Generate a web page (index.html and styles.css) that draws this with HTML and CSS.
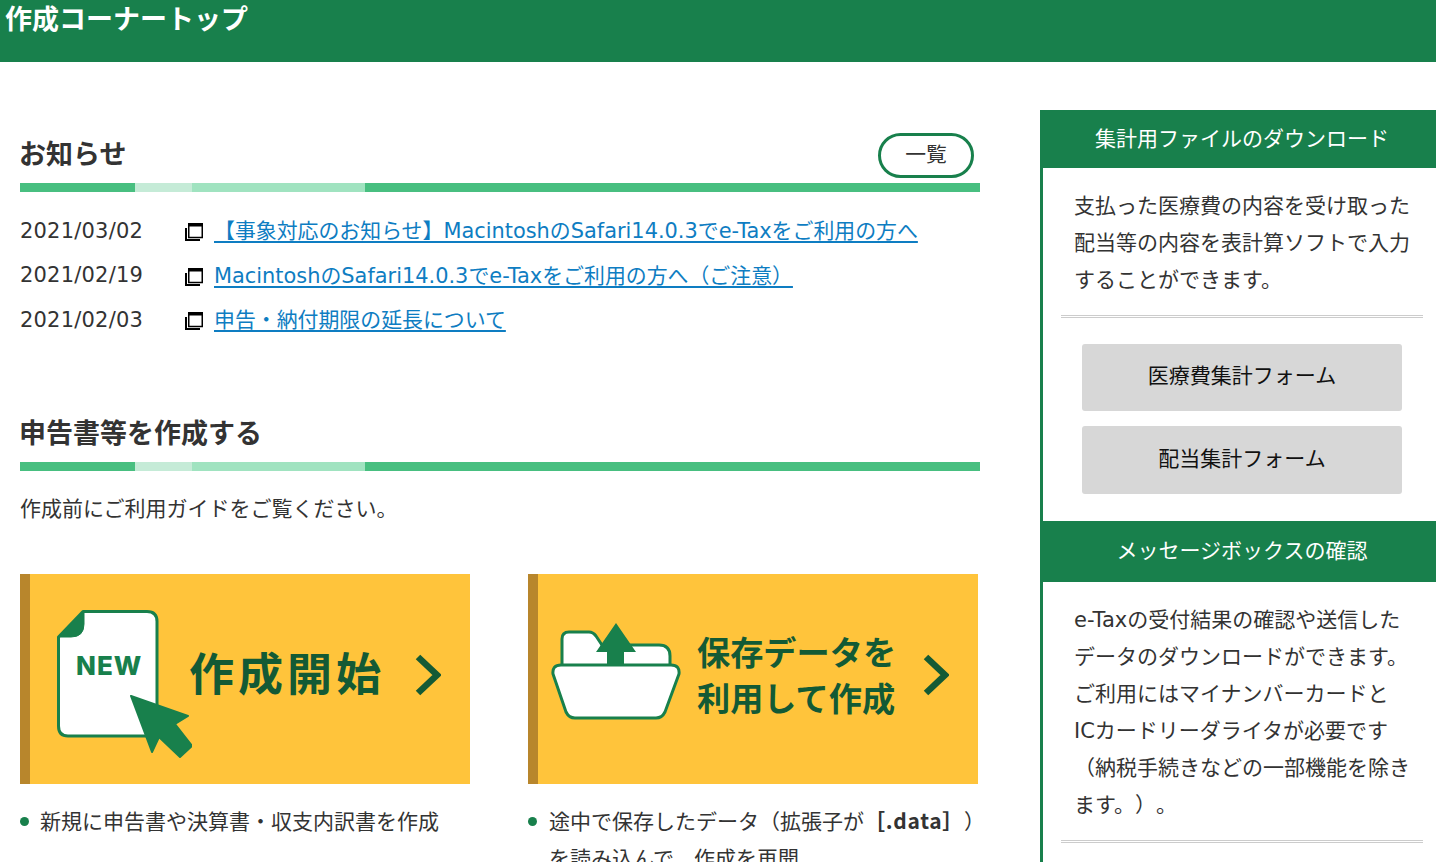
FILE: index.html
```html
<!DOCTYPE html>
<html lang="ja">
<head>
  <meta charset="UTF-8">
  <title>作成コーナートップ</title>
  <link rel="stylesheet" href="styles.css">
</head>
<body>
  <header class="page-head">
    <h1>作成コーナートップ</h1>
  </header>
  <div class="page-body">
    <main class="main-col">
      <section class="news">
        <div class="sec-head">
          <h2>お知らせ</h2>
          <a class="pill" href="#">一覧</a>
        </div>
        <div class="sec-bar"></div>
        <ul class="news-list">
          <li>
            <span class="news-date">2021/03/02</span>
            <svg class="win-icon" viewBox="0 0 18 18"><path d="M1 5v12h14" fill="none" stroke="#000" stroke-width="2"/><rect x="3.75" y="1" width="13.5" height="13.5" fill="#fff" stroke="#000" stroke-width="1.5"/><rect x="3" y="0" width="15" height="3.5"/></svg>
            <a href="#">【事象対応のお知らせ】MacintoshのSafari14.0.3でe-Taxをご利用の方へ</a>
          </li>
          <li>
            <span class="news-date">2021/02/19</span>
            <svg class="win-icon" viewBox="0 0 18 18"><path d="M1 5v12h14" fill="none" stroke="#000" stroke-width="2"/><rect x="3.75" y="1" width="13.5" height="13.5" fill="#fff" stroke="#000" stroke-width="1.5"/><rect x="3" y="0" width="15" height="3.5"/></svg>
            <a href="#">MacintoshのSafari14.0.3でe-Taxをご利用の方へ（ご注意）</a>
          </li>
          <li>
            <span class="news-date">2021/02/03</span>
            <svg class="win-icon" viewBox="0 0 18 18"><path d="M1 5v12h14" fill="none" stroke="#000" stroke-width="2"/><rect x="3.75" y="1" width="13.5" height="13.5" fill="#fff" stroke="#000" stroke-width="1.5"/><rect x="3" y="0" width="15" height="3.5"/></svg>
            <a href="#">申告・納付期限の延長について</a>
          </li>
        </ul>
      </section>

      <section class="create">
        <div class="sec-head">
          <h2>申告書等を作成する</h2>
        </div>
        <div class="sec-bar"></div>
        <p class="guide">作成前にご利用ガイドをご覧ください。</p>
        <div class="start-cols">
          <div class="start-col">
            <a class="start-btn" href="#">
              <svg class="icon-new" viewBox="0 0 135 149">
                <path d="M26 1.5H90Q100 1.5 100 11.500V116Q100 126 90 126H11Q1.500 126 1.500 116V27Z" fill="#fff" stroke="#18804c" stroke-width="3" stroke-linejoin="round"/>
                <path d="M1.500 27L27 1.500V14Q27 27 14 27Z" fill="#18804c" stroke="#18804c"/>
                <text class="new-label" x="19" y="65">NEW</text>
                <path d="M74 86L131 106L118 114L135 136L123 147L102 127L95 142Z" fill="#18804c" stroke="#18804c" stroke-width="2" stroke-linejoin="round"/>
              </svg>
              <span class="start-big">作成開始</span>
              <svg class="chevron" viewBox="0 0 26 42"><path d="M3 3L22 21L3 39" fill="none" stroke="#135a35" stroke-width="6.500"/></svg>
            </a>
            <ul class="notes">
              <li>新規に申告書や決算書・収支内訳書を作成</li>
            </ul>
          </div>
          <div class="start-col">
            <a class="start-btn" href="#">
              <svg class="icon-folder" viewBox="0 0 130 98">
                <path d="M11 44V17Q11 10 18 10H38Q42 10 45 14L51 23H108Q119 23 119 34V44Z" fill="#fff" stroke="#18804c" stroke-width="3"/>
                <path d="M65 1L85 30H73V44H56V30H45Z" fill="#18804c"/>
                <path d="M10 43H120Q129 43 128 52L114 90Q111 96 105 96H24Q18 96 15 90L2 52Q1 43 10 43Z" fill="#fff" stroke="#18804c" stroke-width="3"/>
              </svg>
              <span class="start-mid">保存データを<br>利用して作成</span>
              <svg class="chevron" viewBox="0 0 26 42"><path d="M3 3L22 21L3 39" fill="none" stroke="#135a35" stroke-width="6.500"/></svg>
            </a>
            <ul class="notes">
              <li class="wide">途中で保存したデータ（拡張子が<b>［.data］</b>）<br>を読み込んで、作成を再開</li>
            </ul>
          </div>
        </div>
      </section>
    </main>

    <aside class="side-col">
      <h3 class="side-head">集計用ファイルのダウンロード</h3>
      <div class="side-box">
        <p>支払った医療費の内容を受け取った<br>配当等の内容を表計算ソフトで入力<br>することができます。</p>
        <hr>
        <a class="side-btn" href="#">医療費集計フォーム</a>
        <a class="side-btn tall" href="#">配当集計フォーム</a>
      </div>
      <h3 class="side-head msg">メッセージボックスの確認</h3>
      <div class="side-box">
        <p>e-Taxの受付結果の確認や送信した<br>データのダウンロードができます。<br>ご利用にはマイナンバーカードと<br>ICカードリーダライタが必要です<br>（納税手続きなどの一部機能を除き<br>ます。）。</p>
        <hr>
      </div>
    </aside>
  </div>
</body>
</html>
```

FILE: styles.css
```css
body {
  margin: 0;
  padding: 0;
  font-family: "DejaVu Sans", "Noto Sans CJK JP", sans-serif;
  font-size: 21px;
  color: #333;
  background: #fff;
  overflow-x: hidden;
  text-spacing-trim: space-all;
}

a {
  text-decoration: none;
}

ul {
  list-style: none;
  margin: 0;
  padding: 0;
}

.page-head {
  height: 62px;
  background: #18804c;
}

.page-head h1 {
  margin: 0;
  padding-left: 5px;
  font-size: 27px;
  line-height: 39px;
  color: #fff;
}

.page-body {
  display: flex;
  gap: 60px;
  padding-left: 20px;
}

.main-col {
  width: 960px;
  padding-top: 71px;
}

.side-col {
  width: 396px;
  padding-top: 48px;
}

/* section titles */
.sec-head {
  display: flex;
  justify-content: space-between;
  min-height: 45px;
  margin-bottom: 5px;
}

.sec-head h2 {
  margin: 0 0 0 -1px;
  font-size: 27px;
  line-height: 43px;
  color: #333;
}

.sec-bar {
  height: 9px;
  background: linear-gradient(to right,
    #48bf80 0, #48bf80 115px,
    #c5ebd7 115px, #c5ebd7 172px,
    #a0e3c0 172px, #a0e3c0 345px,
    #48bf80 345px);
}

.pill {
  box-sizing: border-box;
  width: 96px;
  height: 45px;
  margin-right: 6px;
  border: 3px solid #18804c;
  border-radius: 23px;
  color: #333;
  line-height: 38px;
  text-align: center;
  font-size: 20.8px;
}

/* news */
.news-list {
  padding-top: 16px;
  margin-bottom: 70px;
}

.news-list li {
  display: flex;
  align-items: center;
  height: 44.5px;
}

.news-date {
  width: 165px;
  letter-spacing: 0.2px;
  padding-top: 1px;
}

.win-icon {
  width: 18px;
  height: 18px;
  margin: 4px 11px 0 0;
}

.news-list a {
  margin-top: -2px;
  color: #0e7dc2;
  font-size: 20.9px;
  text-decoration: underline;
  text-decoration-thickness: 2px;
  text-underline-offset: 3px;
}

/* create */
.guide {
  margin: 20px 0 46px;
  line-height: 37px;
}

.start-cols {
  display: flex;
  gap: 58px;
}

.start-col {
  width: 450px;
}

.start-btn {
  box-sizing: border-box;
  display: flex;
  align-items: center;
  height: 210px;
  padding-bottom: 6px;
  padding-right: 29px;
  background: #ffc43b;
  border-left: 10px solid #b8862c;
  color: #135a35;
  font-family: "Noto Sans CJK JP", sans-serif;
  font-weight: 700;
}

.icon-new {
  flex: none;
  width: 135px;
  height: 149px;
  margin: 18px -3px 0 27px;
}

.new-label {
  font-family: Inter, sans-serif;
  font-size: 26px;
  font-weight: 800;
  letter-spacing: 1px;
  fill: #18804c;
}

.icon-folder {
  flex: none;
  width: 130px;
  height: 98px;
  margin: -10px 16px 0 13px;
}

.start-big {
  margin-bottom: 8px;
  font-size: 45px;
  letter-spacing: 4px;
  line-height: 50px;
}

.start-mid {
  margin-bottom: 4px;
  font-size: 33.2px;
  line-height: 46px;
}

.chevron {
  flex: none;
  width: 26px;
  height: 42px;
  margin-left: auto;
  margin-bottom: 2px;
}

.notes {
  margin-top: 20px;
}

.notes li {
  position: relative;
  padding-left: 20px;
  line-height: 37px;
}

.notes li.wide {
  padding-left: 21px;
  white-space: nowrap;
}

.notes b {
  font-family: "Noto Sans CJK JP", sans-serif;
  line-height: 1;
  letter-spacing: 0.7px;
}

.notes li::before {
  content: "";
  position: absolute;
  left: 0;
  top: 13px;
  width: 9px;
  height: 9px;
  border-radius: 50%;
  background: #18804c;
}

/* sidebar */
.side-head {
  margin: 0;
  padding-left: 8px;
  height: 58px;
  background: #18804c;
  color: #fff;
  font-size: 21px;
  font-weight: 400;
  line-height: 58px;
  text-align: center;
}

.side-head.msg {
  height: 61px;
  line-height: 61px;
}

.side-box {
  padding: 20px 13px 27px 18px;
  border-left: 3px solid #18804c;
}

.side-box p {
  margin: 0 0 16px 13px;
  line-height: 37px;
  white-space: nowrap;
}

.side-box hr {
  margin: 0 0 26px;
  border: 0;
  border-top: 3px double #ccc;
}

.side-btn {
  display: block;
  width: 320px;
  height: 67px;
  margin: 0 0 15px 21px;
  border-radius: 3px;
  background: #d7d7d7;
  color: #111;
  line-height: 65px;
  text-align: center;
}

.side-btn.tall {
  height: 68px;
  margin-bottom: 0;
  line-height: 67px;
}
```
